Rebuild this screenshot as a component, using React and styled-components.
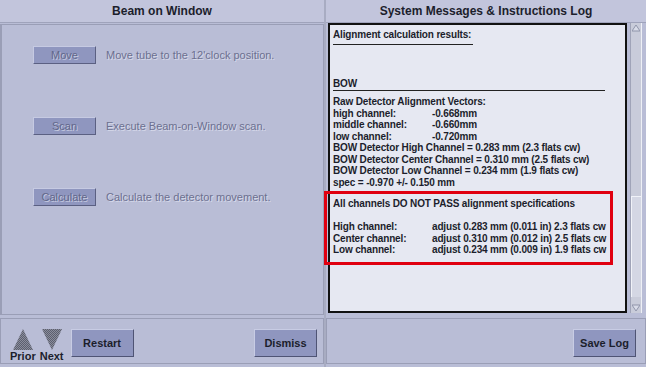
import React from "react";
import styled, { createGlobalStyle } from "styled-components";

const GlobalStyle = createGlobalStyle`
  html, body {
    margin: 0;
    padding: 0;
    background: #b9bdd6;
  }
  body {
    font-family: "Liberation Sans", Arial, sans-serif;
  }
`;

const Screen = styled.div`
  width: 646px;
  height: 367px;
  display: flex;
  gap: 2px;
  background: #a8acc2;
  overflow: hidden;
`;

const Column = styled.div`
  width: ${(p) => p.width}px;
  display: flex;
  flex-direction: column;
  background: #b9bdd6;
`;

const Header = styled.div`
  height: 22px;
  display: flex;
  align-items: center;
  justify-content: center;
  background: #c2c5dc;
  border-bottom: 1px solid #9fa3bb;
  font-size: 12px;
  font-weight: bold;
  color: #1c1e2c;
`;

const Body = styled.div`
  flex: 1;
  margin: 1px 0 3px 0;
  border: 1px solid #9a9eb6;
  border-left-width: 2px;
  padding: 21px 0 0 31px;
  display: flex;
  flex-direction: column;
  gap: 53px;
`;

const StepRow = styled.div`
  display: flex;
  align-items: center;
  gap: 10px;
`;

const DimButton = styled.div`
  width: 61px;
  height: 16px;
  box-sizing: content-box;
  display: flex;
  align-items: center;
  justify-content: center;
  background: #8f96bf;
  border: 1px solid;
  border-color: #c6cae2 #5b6082 #5b6082 #c6cae2;
  font-size: 11px;
  color: #62678a;
  text-shadow: 1px 1px 0 #c6cae0;
`;

const DimText = styled.span`
  font-size: 11px;
  color: #6c7090;
  text-shadow: 1px 1px 0 #d6d9ea;
`;

const Footer = styled.div`
  height: 46px;
  margin-bottom: 3px;
  border: 1px solid #9a9eb6;
  display: flex;
  align-items: center;
  padding: 4px ${(p) => p.right}px 0 9px;
  box-sizing: border-box;
  gap: 7px;
`;

const NavGroup = styled.div`
  display: flex;
  gap: 4px;
  align-self: flex-end;
  padding-bottom: 1px;
`;

const Nav = styled.div`
  display: flex;
  flex-direction: column;
  align-items: center;
  font-size: 11px;
  font-weight: bold;
  color: #1c1e2c;
  line-height: 12px;
`;

const ActionButton = styled.button`
  width: 63px;
  height: 28px;
  margin-left: ${(p) => (p.push ? "auto" : "0")};
  background: #8f96bf;
  border: 1px solid;
  border-color: #c8cce4 #4f5474 #4f5474 #c8cce4;
  font-family: "Liberation Sans", Arial, sans-serif;
  font-size: 11px;
  font-weight: bold;
  color: #1c1e2c;
  padding: 0;
`;

const LogArea = styled.div`
  flex: 1;
  display: flex;
  gap: 3px;
  padding: 0 4px 0 2px;
  margin-bottom: 5px;
`;

const LogBox = styled.div`
  flex: 1;
  background: #e6e8f2;
  border: 2px solid #111;
  padding: 4px 0 0 3px;
  font-size: 10px;
  font-weight: bold;
  letter-spacing: -0.15px;
  color: #1c1e2c;
  line-height: 11.5px;
`;

const Line = styled.div`
  white-space: pre;
  height: 11.5px;
`;

const Rule = styled.div`
  width: ${(p) => p.width}px;
  border-top: 1px solid #222;
  margin: ${(p) => p.before}px 0 ${(p) => p.after}px;
`;

const Pair = styled.div`
  display: flex;
  white-space: pre;
  height: 11.5px;
`;

const Label = styled.span`
  width: 99px;
`;

const Alert = styled.div`
  margin: 3px 0 0 -9px;
  width: 289px;
  box-sizing: border-box;
  border: 3px solid #e00010;
  padding: 4px 0 6px 6px;
`;

const Scrollbar = styled.div`
  width: 10px;
  display: flex;
  flex-direction: column;
  background: #c9ccda;
  border-left: 1px solid #a0a4b8;
  border-right: 1px solid #eef0f6;
`;

const Arrow = styled.div`
  height: 10px;
  display: flex;
  align-items: center;
  justify-content: center;
`;

const Trough = styled.div`
  flex: 1;
  display: flex;
  flex-direction: column;
  justify-content: flex-end;
  padding-bottom: 6px;
`;

const Thumb = styled.div`
  height: 100px;
  background: #d4d7e4;
  border-top: 1px solid #f0f2f8;
  border-left: 1px solid #f0f2f8;
`;

const Dither = ({ down }) => (
  <svg width="20" height="21" viewBox="0 0 20 21">
    <defs>
      <pattern id={down ? "dd" : "du"} width="2" height="2" patternUnits="userSpaceOnUse">
        <rect width="2" height="2" fill="#5c5f6e" />
        <rect width="1" height="1" fill="#8a8d9c" />
        <rect x="1" y="1" width="1" height="1" fill="#8a8d9c" />
      </pattern>
    </defs>
    <polygon
      points={down ? "0,0 20,0 10,21" : "10,0 20,21 0,21"}
      fill={`url(#${down ? "dd" : "du"})`}
    />
  </svg>
);

const ArrowIcon = ({ down }) => (
  <svg width="8" height="8" viewBox="0 0 8 8">
    <polygon points={down ? "0,1 8,1 4,7" : "4,1 8,7 0,7"} fill="#d8dbe8" stroke="#9095aa" strokeWidth="1" />
  </svg>
);

const steps = [
  { label: "Move", text: "Move tube to the 12'clock position." },
  { label: "Scan", text: "Execute Beam-on-Window scan." },
  { label: "Calculate", text: "Calculate the detector movement." },
];

const raw = [
  ["high channel:", "-0.668mm"],
  ["middle channel:", "-0.660mm"],
  ["low channel:", "-0.720mm"],
];

const detector = [
  "BOW Detector High Channel = 0.283 mm (2.3 flats cw)",
  "BOW Detector Center Channel = 0.310 mm (2.5 flats cw)",
  "BOW Detector Low Channel = 0.234 mm (1.9 flats cw)",
  "spec = -0.970 +/- 0.150 mm",
];

const adjust = [
  ["High channel:", "adjust 0.283 mm (0.011 in) 2.3 flats cw"],
  ["Center channel:", "adjust 0.310 mm (0.012 in) 2.5 flats cw"],
  ["Low channel:", "adjust 0.234 mm (0.009 in) 1.9 flats cw"],
];

export default function App() {
  return (
    <>
      <GlobalStyle />
      <Screen>
        <Column width={324}>
          <Header>Beam on Window</Header>
          <Body>
            {steps.map((s) => (
              <StepRow key={s.label}>
                <DimButton>{s.label}</DimButton>
                <DimText>{s.text}</DimText>
              </StepRow>
            ))}
          </Body>
          <Footer right={6}>
            <NavGroup>
              <Nav>
                <Dither />
                Prior
              </Nav>
              <Nav>
                <Dither down />
                Next
              </Nav>
            </NavGroup>
            <ActionButton>Restart</ActionButton>
            <ActionButton push>Dismiss</ActionButton>
          </Footer>
        </Column>
        <Column width={320}>
          <Header>System Messages &amp; Instructions Log</Header>
          <LogArea>
            <LogBox>
              <Line>Alignment calculation results:</Line>
              <Rule width={140} before={3} after={33} />
              <Line>BOW</Line>
              <Rule width={272} before={1} after={5} />
              <Line>Raw Detector Alignment Vectors:</Line>
              {raw.map(([l, v]) => (
                <Pair key={l}>
                  <Label>{l}</Label>
                  <span>{v}</span>
                </Pair>
              ))}
              {detector.map((d) => (
                <Line key={d}>{d}</Line>
              ))}
              <Alert>
                <Line>All channels DO NOT PASS alignment specifications</Line>
                <Line />
                {adjust.map(([l, v]) => (
                  <Pair key={l}>
                    <Label>{l}</Label>
                    <span>{v}</span>
                  </Pair>
                ))}
              </Alert>
            </LogBox>
            <Scrollbar>
              <Arrow>
                <ArrowIcon />
              </Arrow>
              <Trough>
                <Thumb />
              </Trough>
              <Arrow>
                <ArrowIcon down />
              </Arrow>
            </Scrollbar>
          </LogArea>
          <Footer right={9}>
            <ActionButton push>Save Log</ActionButton>
          </Footer>
        </Column>
      </Screen>
    </>
  );
}
